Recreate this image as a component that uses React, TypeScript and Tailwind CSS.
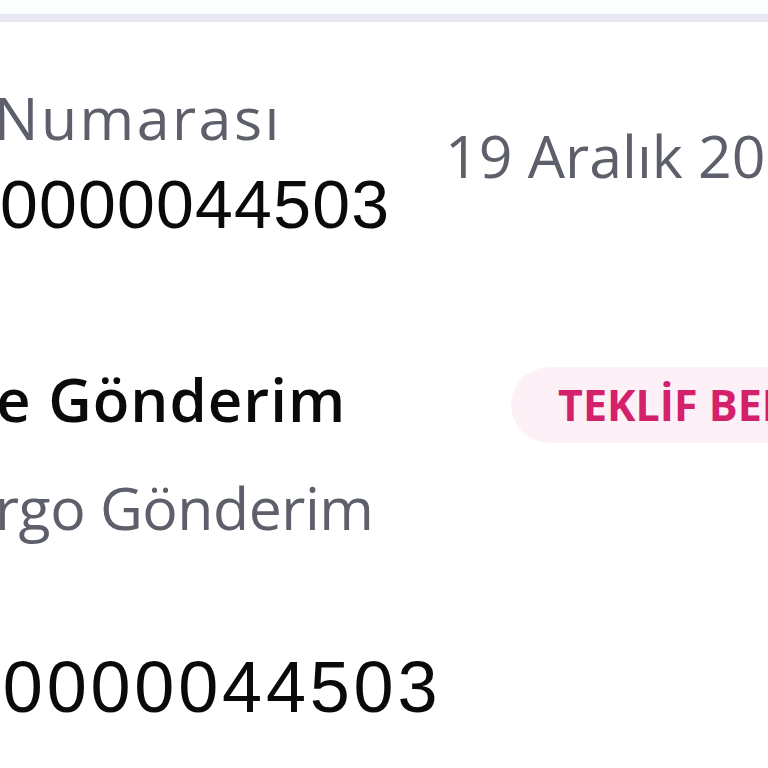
import React from "react";

export default function App() {
  const sans = { fontFamily: '"Open Sans", "Noto Sans", sans-serif' };
  const num = { fontFamily: '"Liberation Sans", Arial, sans-serif' };
  return (
    <div className="w-[768px] h-[768px] overflow-hidden bg-white flex flex-col">
      <div className="h-[14px] bg-[#fcfdfd] shrink-0" />
      <div className="h-[8px] bg-[#e7e7ef] shrink-0" />
      <div className="flex flex-row mt-[66px]">
        <div className="w-[445px] shrink-0 flex flex-col">
          <div className="h-[59px] text-[59px] leading-[59px] tracking-[2.5px] text-[#5d606b] whitespace-nowrap -ml-[6px]" style={sans}>
            Numarası
          </div>
          <div className="mt-[23px] h-[68px] text-[68px] leading-[68px] tracking-[1.2px] text-[#0a0a0a] whitespace-nowrap" style={num}>
            0000044503
          </div>
        </div>
        <div className="mt-[38px] h-[59px] text-[59px] leading-[59px] text-[#5d606b] whitespace-nowrap" style={sans}>
          19 Aralık 2023
        </div>
      </div>
      <div className="flex flex-row items-start mt-[129px]">
        <div className="w-[515px] shrink-0 mt-[2px] h-[60px] text-[60px] leading-[60px] tracking-[1px] font-semibold text-[#0a0a0a] whitespace-nowrap -ml-[4px]" style={sans}>
          e Gönderim
        </div>
        <div className="h-[76px] rounded-full bg-[#fdf1f7] pl-[47px] pr-[40px] flex items-center whitespace-nowrap" style={sans}>
          <span className="text-[43px] leading-[76px] font-bold text-[#d4216c]">TEKLİF BEKLENİYOR</span>
        </div>
      </div>
      <div className="mt-[35px] h-[59px] text-[59px] leading-[59px] tracking-[-0.5px] text-[#5d606b] whitespace-nowrap -ml-[5px]" style={sans}>
        rgo Gönderim
      </div>
      <div className="mt-[114px] h-[72px] text-[72px] leading-[72px] tracking-[3.8px] text-[#0a0a0a] whitespace-nowrap -ml-[41px]" style={num}>
        00000044503
      </div>
    </div>
  );
}
